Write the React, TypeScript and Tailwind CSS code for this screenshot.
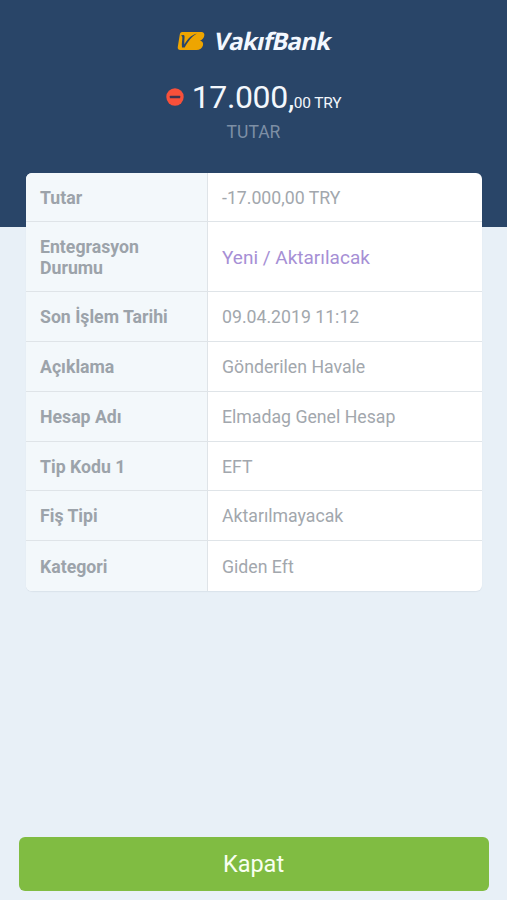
/**
 * Account transaction detail screen
 */

interface DetailRow {
  label: string;
  value: string;
  highlight?: boolean;
}

const rows: DetailRow[] = [
  { label: 'Tutar', value: '-17.000,00 TRY' },
  { label: 'Entegrasyon Durumu', value: 'Yeni / Aktarılacak', highlight: true },
  { label: 'Son İşlem Tarihi', value: '09.04.2019 11:12' },
  { label: 'Açıklama', value: 'Gönderilen Havale' },
  { label: 'Hesap Adı', value: 'Elmadag Genel Hesap' },
  { label: 'Tip Kodu 1', value: 'EFT' },
  { label: 'Fiş Tipi', value: 'Aktarılmayacak' },
  { label: 'Kategori', value: 'Giden Eft' },
];

const BankLogo = () => (
  <div className="flex h-[22px] w-[153px] items-center">
    <svg className="h-5 w-7 shrink-0" viewBox="0 0 28 20">
      <path
        d="M5.2 1H24.2C27 1 28 3.2 27 5.7C26.4 7.4 25 8.8 23 9.6C25.4 10.3 26.5 12 26 14.3C25.3 17.3 22.8 19 19.5 19H3.2C1.2 19 .4 17.8.8 15.8L2.7 4C3 2.2 3.8 1 5.2 1Z"
        fill="#eea500"
      />
      <path
        d="M3.7 5.2C4.9 3.7 7.1 3.5 7.5 5.1C7.8 6.7 7 10.1 7.4 13.4C10.5 8.2 14 4.2 19.8 2.6C15.1 5.4 10.8 10.7 7.7 16.4H5C4.4 12.2 5.6 8.4 5.3 6C5.1 5 4.4 4.8 3.7 5.2Z"
        fill="#294568"
      />
    </svg>
    <span className="ml-2.5 inline-block -skew-x-12 font-['Open_Sans',sans-serif] text-[24px] leading-none font-bold tracking-[-0.75px] text-[#f3f8ff]">
      VakıfBank
    </span>
  </div>
);

const Amount = () => (
  <div className="flex h-[38px] items-center">
    <svg className="mr-2 h-[18px] w-[18px] shrink-0" viewBox="0 0 18 18">
      <circle cx="9" cy="9" r="8.7" fill="#f8503a" />
      <rect x="3.8" y="7.7" width="10.4" height="2.6" rx="0.5" fill="#3c3450" />
    </svg>
    <div className="flex items-baseline whitespace-nowrap text-[#f3f7fc]">
      <span className="text-[32px] leading-[38px] tracking-[-0.35px]">17.000,</span>
      <span className="text-[15.5px] tracking-[-0.2px]">00 TRY</span>
    </div>
  </div>
);

const DetailTable = () => (
  <div className="overflow-hidden rounded-md bg-white shadow-[0_1px_1px_rgba(60,80,100,0.08)]">
    {rows.map((row) => (
      <div
        key={row.label}
        className={`flex border-b border-[#dfe4e8] last:border-b-0 ${row.highlight ? 'h-[70px]' : 'h-[49.75px]'}`}
      >
        <div className="flex w-[182px] shrink-0 items-center border-r border-[#dfe4e8] bg-[#f3f8fb] pt-[2.5px] pr-8 pl-3.5 text-[17.7px] leading-[21px] font-bold text-[#9ca3aa]">
          {row.label}
        </div>
        <div
          className={`flex flex-1 items-center pt-[2px] pl-3.5 ${
            row.highlight ? 'text-[19px] text-[#a68fd5]' : 'text-[17.7px] text-[#a2a7ad]'
          }`}
        >
          {row.value}
        </div>
      </div>
    ))}
  </div>
);

export default function App() {
  return (
    <div className="flex h-[900px] w-[507px] flex-col overflow-hidden bg-[#e8f0f7] font-[Roboto,sans-serif]">
      <header className="flex h-[227px] shrink-0 flex-col items-center bg-[#294568] pt-[30px]">
        <BankLogo />
        <div className="mt-[26px]">
          <Amount />
        </div>
        <div className="mt-1 text-[17.5px] leading-6 text-[#7d8fa5]">TUTAR</div>
      </header>

      <main className="-mt-[54.5px] pr-[25px] pl-[26px]">
        <DetailTable />
      </main>

      <footer className="mt-auto pr-[18px] pb-[9px] pl-[19px]">
        <button className="h-[54px] w-full rounded-md bg-[#80bc42] pt-px pr-px text-[23.5px] text-[#f8fff0]">
          Kapat
        </button>
      </footer>
    </div>
  );
}
